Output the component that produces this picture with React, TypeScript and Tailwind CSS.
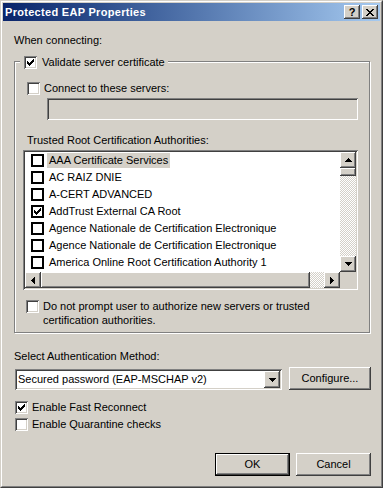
import React from "react";

const raised =
  "shadow-[inset_-1px_-1px_#404040,inset_1px_1px_#ffffff,inset_-2px_-2px_#808080]";
const sunken =
  "shadow-[inset_1px_1px_#808080,inset_-1px_-1px_#ffffff,inset_2px_2px_#404040,inset_-2px_-2px_#d4d0c8]";
const dither =
  "bg-[repeating-conic-gradient(#d4d0c8_0_25%,#ffffff_0_50%)] bg-size-[2px_2px]";

function Tick() {
  const cols = [2, 3, 4, 3, 2, 1, 0];
  return (
    <svg width="7" height="7" viewBox="0 0 7 7" shapeRendering="crispEdges" className="block">
      {cols.map((y, x) => (
        <rect key={x} x={x} y={y} width="1" height="3" fill="#000" />
      ))}
    </svg>
  );
}

function CheckBox({ checked }: { checked?: boolean }) {
  return (
    <div className={`h-[13px] w-[13px] shrink-0 bg-white p-[3px] ${sunken}`}>
      {checked && <Tick />}
    </div>
  );
}

function FlatCheck({ checked }: { checked?: boolean }) {
  return (
    <div className="h-[13px] w-[13px] shrink-0 border-2 border-black bg-white p-px">
      {checked && <Tick />}
    </div>
  );
}

type Dir = "up" | "down" | "left" | "right";

function Arrow({ dir }: { dir: Dir }) {
  const rows = [0, 1, 2, 3];
  const vertical = dir === "up" || dir === "down";
  return (
    <svg
      width={vertical ? 7 : 4}
      height={vertical ? 4 : 7}
      shapeRendering="crispEdges"
      className="block"
    >
      {rows.map((i) => {
        const k = dir === "up" || dir === "left" ? i : 3 - i;
        return vertical ? (
          <rect key={i} x={3 - k} y={i} width={2 * k + 1} height="1" fill="#000" />
        ) : (
          <rect key={i} x={i} y={3 - k} width="1" height={2 * k + 1} fill="#000" />
        );
      })}
    </svg>
  );
}

function ScrollButton({ dir, tall }: { dir: Dir; tall?: boolean }) {
  return (
    <div
      className={`flex w-[16px] shrink-0 items-center justify-center bg-[#d4d0c8] ${
        tall ? "h-[17px]" : "h-[16px]"
      } ${raised}`}
    >
      <Arrow dir={dir} />
    </div>
  );
}

function XGlyph() {
  const rows = [
    [0, 1, 6, 7],
    [1, 2, 5, 6],
    [2, 3, 4, 5],
    [3, 4],
    [2, 3, 4, 5],
    [1, 2, 5, 6],
    [0, 1, 6, 7],
  ];
  return (
    <svg width="8" height="7" shapeRendering="crispEdges" className="block">
      {rows.map((xs, y) =>
        xs.map((x) => <rect key={`${x}-${y}`} x={x} y={y} width="1" height="1" fill="#000" />)
      )}
    </svg>
  );
}

function CaptionButton({ children, className = "" }: { children: React.ReactNode; className?: string }) {
  return (
    <div
      className={`flex h-[14px] w-[16px] items-center justify-center bg-[#d4d0c8] ${raised} ${className}`}
    >
      {children}
    </div>
  );
}

function PushButton({
  children,
  width,
  isDefault,
}: {
  children: React.ReactNode;
  width: string;
  isDefault?: boolean;
}) {
  return (
    <div
      className={`flex h-[23px] items-center justify-center bg-[#d4d0c8] ${width} ${raised} ${
        isDefault ? "border border-black" : ""
      }`}
    >
      {children}
    </div>
  );
}

const authorities = [
  { name: "AAA Certificate Services", selected: true },
  { name: "AC RAIZ DNIE" },
  { name: "A-CERT ADVANCED" },
  { name: "AddTrust External CA Root", checked: true },
  { name: "Agence Nationale de Certification Electronique" },
  { name: "Agence Nationale de Certification Electronique" },
  { name: "America Online Root Certification Authority 1" },
];

function CertList() {
  return (
    <div className={`ml-[8px] mt-[3px] flex h-[140px] w-[335px] flex-col bg-white p-[2px] ${sunken}`}>
      <div className="flex h-[120px]">
        <div className="w-[315px] overflow-hidden">
          {authorities.map((a, i) => (
            <div key={i} className="flex h-[17px] items-center whitespace-nowrap pl-[6px]">
              <FlatCheck checked={a.checked} />
              <span className={`ml-[3px] px-[2px] leading-[15px] ${a.selected ? "bg-[#d4d0c8]" : ""}`}>
                {a.name}
              </span>
            </div>
          ))}
        </div>
        <div className="flex w-[16px] flex-col">
          <ScrollButton dir="up" />
          <div className={`h-[8px] bg-[#d4d0c8] ${raised}`} />
          <div className={`flex-1 ${dither}`} />
          <ScrollButton dir="down" />
        </div>
      </div>
      <div className="flex h-[16px]">
        <ScrollButton dir="left" />
        <div className={`h-[16px] w-[269px] bg-[#d4d0c8] ${raised}`} />
        <div className={`flex-1 ${dither}`} />
        <ScrollButton dir="right" />
        <div className="w-[16px] bg-[#d4d0c8]" />
      </div>
    </div>
  );
}

export default function App() {
  return (
    <div className="h-[488px] w-[383px] border border-[#d4d0c8] border-r-[#404040] border-b-[#404040] bg-[#d4d0c8] font-['Liberation_Sans',Arial,sans-serif] text-[11px] leading-[13px] text-black">
      <div className="flex h-full flex-col border border-white border-r-[#808080] border-b-[#808080] p-px">
        {/* caption */}
        <div className="flex h-[18px] shrink-0 items-center bg-gradient-to-r from-[#0a246a] to-[#a6caf0] px-[2px]">
          <span className="flex-1 font-bold tracking-[0.3px] text-white">Protected EAP Properties</span>
          <CaptionButton>
            <span className="text-[11px] font-bold leading-none">?</span>
          </CaptionButton>
          <CaptionButton className="ml-[2px]">
            <XGlyph />
          </CaptionButton>
        </div>

        <div className="flex flex-1 flex-col pl-[11px] pr-[9px]">
          <div className="mt-[13px]">When connecting:</div>

          {/* group box */}
          <div className="relative mt-[14px] flex h-[272px] w-[356px] flex-col border border-[#808080] shadow-[inset_1px_1px_#ffffff,1px_1px_#ffffff]">
            <div className="absolute left-[5px] top-[-6px] flex h-[13px] items-center bg-[#d4d0c8] pl-[4px] pr-[3px]">
              <CheckBox checked />
              <span className="ml-[5px]">Validate server certificate</span>
            </div>

            <div className="ml-[12px] mt-[20px] flex h-[13px] items-center">
              <CheckBox />
              <span className="ml-[4px]">Connect to these servers:</span>
            </div>
            <div className={`ml-[32px] mt-[3px] h-[22px] w-[311px] bg-[#d4d0c8] ${sunken}`} />

            <div className="ml-[12px] mt-[14px]">Trusted Root Certification Authorities:</div>
            <CertList />

            <div className="ml-[11px] mt-[9px] flex items-start">
              <div className="mt-px">
                <CheckBox />
              </div>
              <span className="ml-[4px] leading-[14px]">
                Do not prompt user to authorize new servers or trusted
                <br />
                certification authorities.
              </span>
            </div>
          </div>

          <div className="mt-[17px]">Select Authentication Method:</div>
          <div className="mt-[4px] flex items-end">
            <div className={`ml-px flex h-[21px] w-[267px] items-center bg-white p-[2px] ${sunken}`}>
              <span className="flex-1 pl-px">Secured password (EAP-MSCHAP v2)</span>
              <ScrollButton dir="down" tall />
            </div>
            <div className="ml-[7px]">
              <PushButton width="w-[82px]">Configure...</PushButton>
            </div>
          </div>

          <div className="ml-px mt-[11px] flex h-[13px] items-center">
            <CheckBox checked />
            <span className="ml-[4px]">Enable Fast Reconnect</span>
          </div>
          <div className="ml-px mt-[4px] flex h-[13px] items-center">
            <CheckBox />
            <span className="ml-[4px]">Enable Quarantine checks</span>
          </div>

          <div className="mt-[22px] flex justify-end gap-[6px]">
            <PushButton width="w-[75px]" isDefault>
              OK
            </PushButton>
            <PushButton width="w-[75px]">Cancel</PushButton>
          </div>
        </div>
      </div>
    </div>
  );
}
